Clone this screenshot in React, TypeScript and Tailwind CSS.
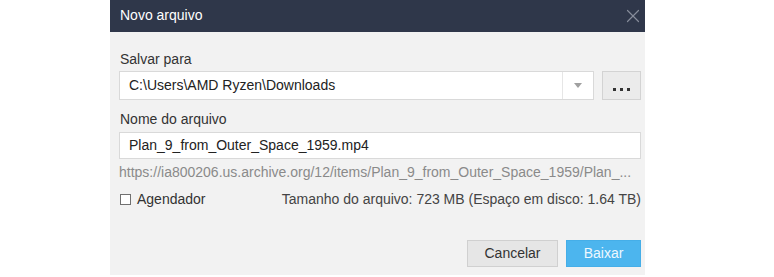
import { X } from 'lucide-react';

export default function App() {
  return (
    <div className="w-[774px] h-[277px] bg-white flex pl-[110px] font-['Liberation_Sans',Arial,sans-serif] text-[14px]">
      <div className="w-[535px] h-[275px] bg-[#f2f2f2] flex flex-col">
        {/* Title bar */}
        <div className="h-[32px] bg-[#2f374a] flex items-center justify-between pl-[10px] pr-[1px]">
          <span className="text-white text-[14px] leading-[16px] -mt-[2px]">Novo arquivo</span>
          <X className="w-[22px] h-[22px] text-[#868c9a]" strokeWidth={1.3} />
        </div>

        <div className="flex flex-col pl-[9px] pr-[4px]">
          {/* Save location */}
          <label className="mt-[19px] ml-[1px] leading-[16px] text-[#333]">Salvar para</label>
          <div className="mt-[4px] flex gap-[8px] h-[29px]">
            <div className="flex-1 flex bg-white border border-[#d9d9d9]">
              <div className="flex-1 flex items-center pl-[9px] text-[#222]">C:\Users\AMD Ryzen\Downloads</div>
              <div className="w-[31px] border-l border-[#e6e6e6] flex items-center justify-center">
                <span className="w-0 h-0 border-l-[4px] border-r-[4px] border-t-[5px] border-l-transparent border-r-transparent border-t-[#a0a0a0]" />
              </div>
            </div>
            <button className="w-[39px] bg-[#ebebeb] border border-[#d3d3d3] flex items-end justify-center gap-[4px] pb-[8px]">
              <span className="w-[3px] h-[3px] bg-[#333]" />
              <span className="w-[3px] h-[3px] bg-[#333]" />
              <span className="w-[3px] h-[3px] bg-[#333]" />
            </button>
          </div>

          {/* File name */}
          <label className="mt-[11px] ml-[1px] leading-[16px] text-[#333]">Nome do arquivo</label>
          <div className="mt-[5px] h-[27px] bg-white border border-[#d9d9d9] flex items-center pl-[9px] text-[#222]">
            Plan_9_from_Outer_Space_1959.mp4
          </div>
          <div className="mt-[5px] leading-[16px] text-[#8a8a8a] whitespace-nowrap">
            https://ia800206.us.archive.org/12/items/Plan_9_from_Outer_Space_1959/Plan_...
          </div>

          {/* Scheduler + size */}
          <div className="mt-[11px] flex items-center justify-between leading-[16px]">
            <div className="flex items-center gap-[6px] ml-[1px]">
              <span className="w-[11px] h-[11px] bg-white border border-[#707070]" />
              <span className="text-[#333]">Agendador</span>
            </div>
            <span className="text-[#444]">Tamanho do arquivo: 723 MB (Espaço em disco: 1.64 TB)</span>
          </div>

          {/* Actions */}
          <div className="mt-[33px] flex justify-end gap-[8px]">
            <button className="w-[91px] h-[27px] bg-[#e6e6e6] border border-[#d0d0d0] text-[#333]">Cancelar</button>
            <button className="w-[75px] h-[27px] bg-[#4cb5ee] border border-[#45aee8] text-[#eef8fe]">Baixar</button>
          </div>
        </div>
      </div>
    </div>
  );
}
